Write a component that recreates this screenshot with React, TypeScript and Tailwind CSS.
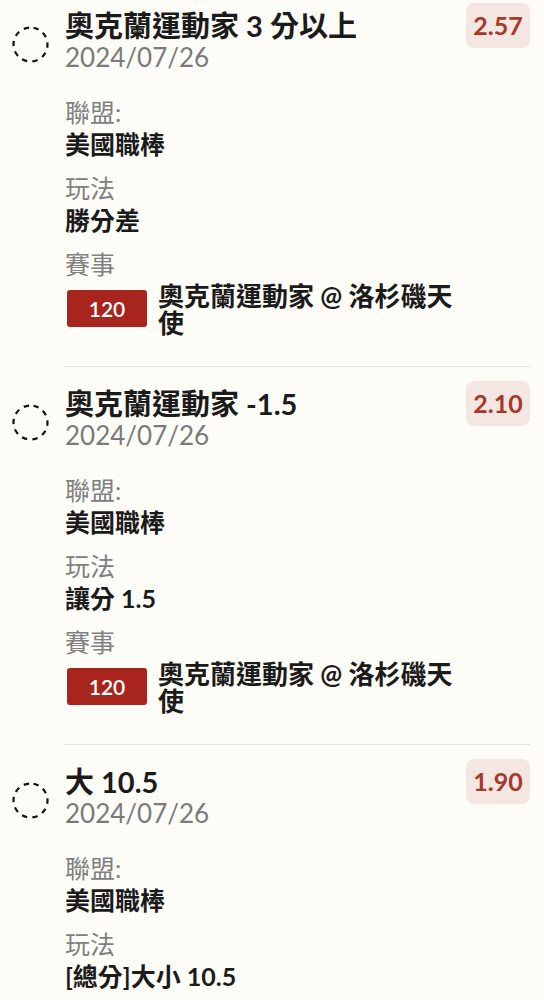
import React from "react";

type Item = {
  title: string;
  date: string;
  odds: string;
  league: string;
  play: string;
  eventNo: string;
  eventName: string;
};

const items: Item[] = [
  {
    title: "奧克蘭運動家 3 分以上",
    date: "2024/07/26",
    odds: "2.57",
    league: "美國職棒",
    play: "勝分差",
    eventNo: "120",
    eventName: "奧克蘭運動家 @ 洛杉磯天使",
  },
  {
    title: "奧克蘭運動家 -1.5",
    date: "2024/07/26",
    odds: "2.10",
    league: "美國職棒",
    play: "讓分 1.5",
    eventNo: "120",
    eventName: "奧克蘭運動家 @ 洛杉磯天使",
  },
  {
    title: "大 10.5",
    date: "2024/07/26",
    odds: "1.90",
    league: "美國職棒",
    play: "[總分]大小 10.5",
    eventNo: "120",
    eventName: "奧克蘭運動家 @ 洛杉磯天使",
  },
];

function DashedCircle() {
  return (
    <svg width="37" height="37" viewBox="0 0 37 37" fill="none">
      <circle
        cx="18.5"
        cy="18.5"
        r="17"
        stroke="#111"
        strokeWidth="2.2"
        strokeDasharray="5.4 5.3"
        transform="rotate(-80 18.5 18.5)"
      />
    </svg>
  );
}

function Row({ item }: { item: Item }) {
  return (
    <div className="flex items-start pt-[14px]">
      <div className="ml-[12px] mt-[23px] h-[37px] w-[37px] shrink-0">
        <DashedCircle />
      </div>
      <div className="ml-4 mr-[14px] flex flex-1 items-start gap-2 border-b border-[#e6e3dd] pb-[29px]">
        <div className="mt-[7px] min-w-0 flex-1">
          <div className="text-[29px] font-bold leading-[32px] text-[#1b1b1b]">{item.title}</div>
          <div className="text-[26px] leading-[30px] text-[#7a7a7a]">{item.date}</div>
          <div className="mt-6 text-[25px] leading-[32px] text-[#808080]">聯盟:</div>
          <div className="text-[25px] font-bold leading-[32px] text-[#1b1b1b]">{item.league}</div>
          <div className="mt-3 text-[25px] leading-[32px] text-[#808080]">玩法</div>
          <div className="text-[25px] font-bold leading-[32px] text-[#1b1b1b]">{item.play}</div>
          <div className="mt-3 text-[25px] leading-[32px] text-[#808080]">賽事</div>
          <div className="mt-[3px] flex items-start">
            <div className="ml-[2px] mt-[7px] flex h-[37px] w-20 shrink-0 items-center justify-center rounded-[3px] bg-[#a8251d] text-[21px] font-semibold text-white">
              {item.eventNo}
            </div>
            <div className="ml-[11px] text-[26px] font-bold leading-[27px] text-[#1b1b1b]">
              {item.eventName}
            </div>
          </div>
        </div>
        <div className="flex h-[45px] w-16 shrink-0 items-center justify-center rounded-lg bg-[#f4e6e1] text-[25px] font-bold text-[#a8382c]">
          {item.odds}
        </div>
      </div>
    </div>
  );
}

export default function App() {
  return (
    <div className="min-h-screen overflow-hidden bg-[#fdfcf7] font-['Lato','Noto_Sans_CJK_TC',sans-serif]">
      <div className="-mt-[11px]">
        {items.map((it, i) => (
          <Row key={i} item={it} />
        ))}
      </div>
    </div>
  );
}
